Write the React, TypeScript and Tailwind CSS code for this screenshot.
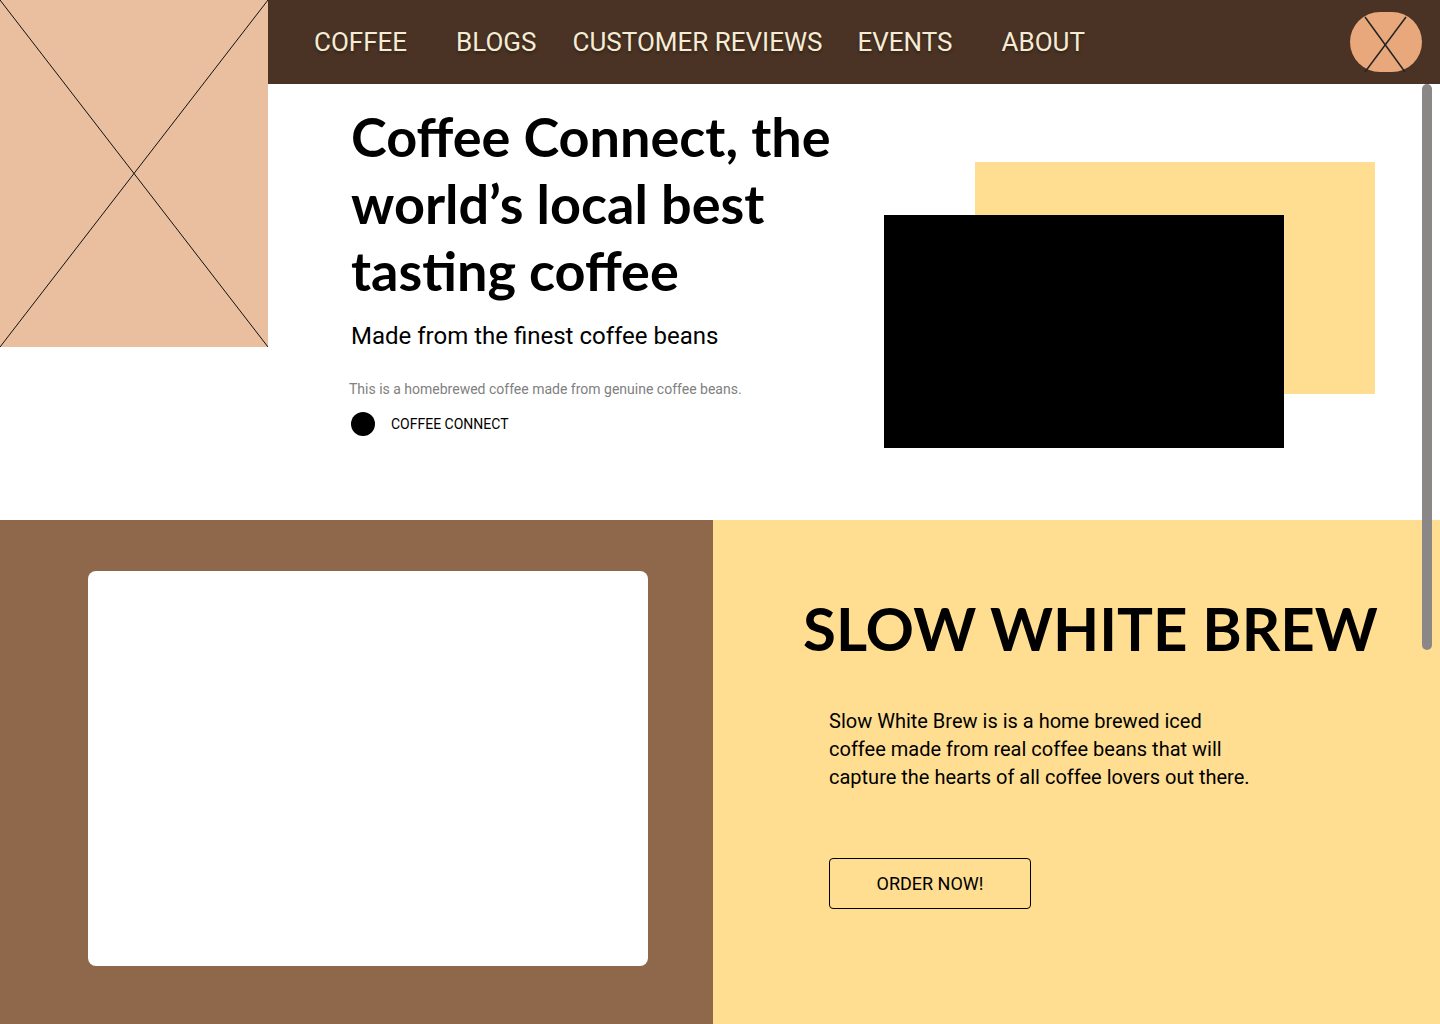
const navItems = [
  { label: "COFFEE", className: "ml-[46px]" },
  { label: "BLOGS", className: "ml-[49px]" },
  { label: "CUSTOMER REVIEWS", className: "ml-[36px]" },
  { label: "EVENTS", className: "ml-[35px]" },
  { label: "ABOUT", className: "ml-[49px]" },
]

function Placeholder() {
  return (
    <div className="relative w-[268px] h-[347px] shrink-0 bg-[#e9bfa0]">
      <svg className="absolute inset-0" width="268" height="347" viewBox="0 0 268 347">
        <line x1="0" y1="0" x2="268" y2="347" stroke="#111" strokeWidth="1" />
        <line x1="268" y1="0" x2="0" y2="347" stroke="#111" strokeWidth="1" />
      </svg>
    </div>
  )
}

function Logo() {
  return (
    <div className="relative w-[72px] h-[60px] mr-[18px] rounded-full bg-[#e8a87c]">
      <svg className="absolute inset-0" width="72" height="60" viewBox="0 0 72 60">
        <line x1="15" y1="5" x2="55" y2="60" stroke="#222" strokeWidth="1.5" />
        <line x1="56" y1="5" x2="15" y2="60" stroke="#222" strokeWidth="1.5" />
      </svg>
    </div>
  )
}

export default function App() {
  return (
    <div
      className="relative w-[1440px] h-[1024px] overflow-hidden bg-white"
      style={{ fontFamily: "Roboto, 'Liberation Sans', sans-serif" }}
    >
      <div className="flex h-[520px]">
        <Placeholder />
        <div className="flex-1 flex flex-col">
          <nav className="h-[84px] bg-[#4a3324] flex items-center">
            {navItems.map((item) => (
              <a
                key={item.label}
                className={`${item.className} text-[26px] text-[#f6ecd6] [text-shadow:0_2px_3px_rgba(0,0,0,0.35)]`}
              >
                {item.label}
              </a>
            ))}
            <div className="flex-1" />
            <Logo />
          </nav>

          <div className="flex-1 flex">
            <div className="pl-[83px] pt-[19px] w-[616px]">
              <h1
                className="text-[54px] leading-[67px] font-bold text-black"
                style={{ fontFamily: "Lato, 'Noto Sans', sans-serif" }}
              >
                Coffee Connect, the world’s local best tasting coffee
              </h1>
              <p className="mt-[15px] text-[24px] leading-[35px] text-black">
                Made from the finest coffee beans
              </p>
              <p className="mt-[25px] -ml-[2px] text-[14px] text-[#808080]">
                This is a homebrewed coffee made from genuine coffee beans.
              </p>
              <div className="mt-[12px] flex items-center gap-[16px]">
                <div className="w-[24px] h-[24px] rounded-full bg-black" />
                <span className="text-[14px] text-black">COFFEE CONNECT</span>
              </div>
            </div>
            <div className="relative flex-1">
              <div className="absolute left-[91px] top-[78px] w-[400px] h-[232px] bg-[#ffde91]" />
              <div className="absolute left-0 top-[131px] w-[400px] h-[233px] bg-black" />
            </div>
          </div>
        </div>
      </div>

      <div className="flex h-[504px]">
        <div className="w-[713px] shrink-0 bg-[#8f674a] pl-[88px] pt-[51px]">
          <div className="w-[560px] h-[395px] bg-white rounded-[8px]" />
        </div>
        <div className="flex-1 min-w-0 bg-[#ffde91] pt-[72px]">
          <h2
            className="pl-[90px] text-[60px] leading-[72px] font-bold text-black whitespace-nowrap"
            style={{ fontFamily: "Lato, 'Noto Sans', sans-serif" }}
          >
            SLOW WHITE BREW
          </h2>
          <p className="ml-[116px] mt-[43px] w-[430px] text-[20px] leading-[28px] text-black">
            Slow White Brew is is a home brewed iced coffee made from real coffee beans that will
            capture the hearts of all coffee lovers out there.
          </p>
          <button className="ml-[116px] mt-[67px] w-[202px] h-[51px] border border-black rounded-[4px] text-[18px] text-black">
            ORDER NOW!
          </button>
        </div>
      </div>

      <div className="absolute right-[8px] top-[84px] w-[10px] h-[566px] rounded-full bg-[#8c8787]" />
    </div>
  )
}
